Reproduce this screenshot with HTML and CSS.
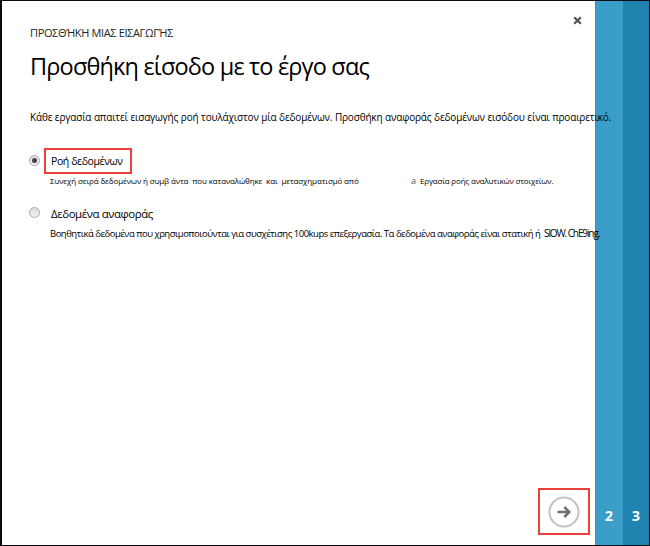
FILE: index.html
```
<!DOCTYPE html>
<html lang="el">
<head>
<meta charset="utf-8">
<title>Προσθήκη εισόδου</title>
<link rel="stylesheet" href="styles.css">
</head>
<body>
<div class="dialog">
  <main class="content">
    <button class="close" aria-label="Κλείσιμο"><svg width="9" height="9" viewBox="0 0 9 9"><path d="M1.2 1.2 7.8 7.8M7.8 1.2 1.2 7.8"/></svg></button>
    <div class="eyebrow"><span>ΠΡΟΣΘΉΚΗ ΜΙΑΣ ΕΙΣΑΓΩΓΉΣ</span></div>
    <h1><span>Προσθήκη είσοδο με το έργο σας</span></h1>
    <p class="intro"><span>Κάθε εργασία απαιτεί εισαγωγής ροή τουλάχιστον μία δεδομένων. Προσθήκη αναφοράς δεδομένων εισόδου είναι προαιρετικό.</span></p>
    <div class="option">
      <i class="radio checked"></i>
      <div class="label marked"><span class="label-stream">Ροή δεδομένων</span></div>
    </div>
    <p class="hint"><span class="hint-source">Συνεχή σειρά δεδομένων ή συμβ άντα&nbsp; που καταναλώθηκε&nbsp; και&nbsp; μετασχηματισμό από</span><span class="hint-a">a</span><span class="hint-job">Εργασία ροής αναλυτικών στοιχείων.</span></p>
    <div class="option second">
      <i class="radio"></i>
      <div class="label"><span class="label-reference">Δεδομένα αναφοράς</span></div>
    </div>
    <p class="hint reference"><span class="hint-use">Βοηθητικά δεδομένα που χρησιμοποιούνται για συσχέτισης 100kups επεξεργασία. Τα δεδομένα αναφοράς είναι στατική ή</span><span class="hint-slow">SlOW. ChE9ing.</span></p>
    <div class="next"><svg width="32" height="32" viewBox="0 0 32 32"><circle cx="16" cy="16" r="14.5"/><path d="M9.5 16H21M16.3 11 21.3 16 16.3 21"/></svg></div>
  </main>
  <aside class="step step-two">2</aside>
  <aside class="step step-three">3</aside>
</div>
</body>
</html>
```
FILE: styles.css
```
* { box-sizing: border-box; }
body { margin: 0; font-family: "Open Sans", "Noto Sans", sans-serif; color: #000; }
.dialog { display: flex; width: 650px; height: 546px; border: 1px solid #0b0b10; border-left-width: 2px; background: #fff; }
.content { position: relative; z-index: 1; display: flex; flex-direction: column; width: 593px; padding: 22px 0 10px 28px; white-space: nowrap; }
.close { position: absolute; left: 571px; top: 15px; width: 9px; height: 9px; padding: 0; border: 0; background: none; }
.close svg { display: block; fill: none; stroke: #555; stroke-width: 2.3; }
.eyebrow { height: 20px; font-size: 11px; line-height: 20px; letter-spacing: -0.36px; color: #222; }
h1 { height: 36px; margin: 5px 0 0; font-size: 23.5px; font-weight: 400; line-height: 36px; letter-spacing: -0.83px; }
.intro { height: 20px; margin: 23px 0 0; font-size: 10px; line-height: 20px; letter-spacing: -0.17px; word-spacing: 0.2px; }
.option { display: flex; align-items: center; gap: 4px; height: 26px; margin-top: 21px; margin-left: -1px; }
.radio { position: relative; top: -1px; display: flex; width: 11px; height: 11px; border: 1px solid #aaa; border-radius: 50%; background: linear-gradient(#ddd, #f2f2f2); }
.checked::after { content: ""; width: 5px; height: 5px; margin: auto; border-radius: 50%; background: #444; }
.label { height: 26px; padding-left: 7px; font-size: 11.4px; line-height: 28px; letter-spacing: -0.4px; }
.marked { width: 88px; padding-left: 5px; border: 2px solid #e9423d; line-height: 22px; font-size: 10.5px; }
.hint { display: flex; height: 14px; margin: 0 0 0 20px; font-size: 8px; line-height: 13px; letter-spacing: -0.13px; }
.hint span { flex: none; }
.hint-source { width: 361px; }
.hint-a { width: 9px; color: #555; font-size: 9px; }
.hint-job { letter-spacing: -0.18px; }
.second { margin-top: 12px; }
.reference { font-size: 9.5px; line-height: 15px; letter-spacing: -0.49px; }
.hint-use { width: 494px; }
.hint-slow { font-size: 10px; letter-spacing: -1.1px; }
.next { display: flex; width: 52px; height: 47px; margin: auto 5px 0 auto; border: 2px solid #e9423d; align-items: center; justify-content: center; }
.next svg { fill: none; stroke: #707070; stroke-width: 2.5; }
.next circle { stroke: #c4c4c4; stroke-width: 2; }
.step { display: flex; align-items: flex-end; justify-content: center; padding-bottom: 19px; font-family: "Noto Sans", sans-serif; font-size: 14.5px; font-weight: 700; line-height: 22px; color: #f4fafc; }
.step-two { width: 28px; padding-right: 1px; background: #3a9ec9; border-left: 1px solid #2f94c1; }
.step-three { width: 26px; background: #1f82af; }
```
